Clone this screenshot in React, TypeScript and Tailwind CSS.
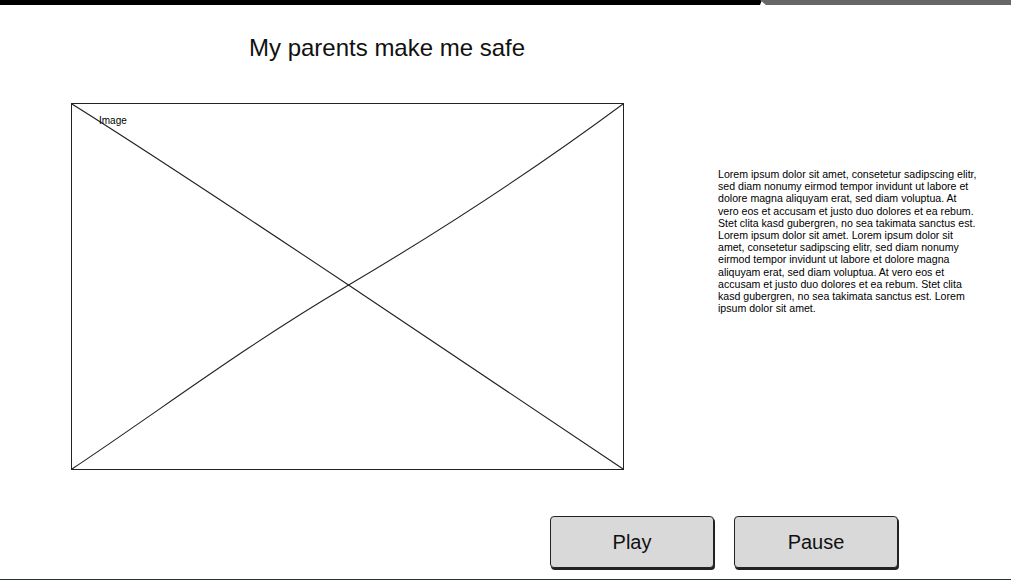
import React from "react";

const lorem =
  "Lorem ipsum dolor sit amet, consetetur sadipscing elitr, sed diam nonumy eirmod tempor invidunt ut labore et dolore magna aliquyam erat, sed diam voluptua. At vero eos et accusam et justo duo dolores et ea rebum. Stet clita kasd gubergren, no sea takimata sanctus est. Lorem ipsum dolor sit amet. Lorem ipsum dolor sit amet, consetetur sadipscing elitr, sed diam nonumy eirmod tempor invidunt ut labore et dolore magna aliquyam erat, sed diam voluptua. At vero eos et accusam et justo duo dolores et ea rebum. Stet clita kasd gubergren, no sea takimata sanctus est. Lorem ipsum dolor sit amet.";

const SketchButton = ({ label }: { label: string }) => (
  <button className="w-[164px] h-[52px] bg-[#d9d9d9] border border-[#222] rounded-[4px] shadow-[1px_2px_0_#222] text-[20px] text-[#111] flex items-center justify-center">
    {label}
  </button>
);

export default function App() {
  return (
    <div className="w-[1011px] h-[580px] bg-white relative overflow-hidden font-['Liberation_Sans',Arial,sans-serif] flex flex-col">
      {/* top strip */}
      <div className="flex h-[5px]">
        <div className="w-[762px] bg-black [clip-path:polygon(0_0,100%_0,calc(100%-2px)_100%,0_100%)]" />
        <div className="flex-1 bg-[#666] -ml-[2px] [clip-path:polygon(0_0,100%_0,100%_100%,6px_100%)]" />
      </div>

      <div className="h-[30px] mt-[28px] pl-[249px] text-[24px] leading-[30px] text-[#111]">
        My parents make me safe
      </div>

      <div className="flex mt-[40px]">
        <div className="ml-[71px] w-[553px] h-[367px] relative border border-[#222]">
          <svg className="absolute inset-0" width="551" height="365" viewBox="0 0 551 365">
            <path d="M0 0 C 80 50, 170 110, 275 180 S 470 310, 551 365" fill="none" stroke="#222" strokeWidth="1.1" />
            <path d="M551 0 C 470 60, 380 120, 275 182 S 90 305, 0 365" fill="none" stroke="#222" strokeWidth="1.1" />
          </svg>
          <span className="absolute left-[27px] top-[12px] text-[10px] leading-none text-black">Image</span>
        </div>
        <p className="ml-[94px] mt-[65px] w-[262px] text-[10.6px] leading-[12.2px] text-black">{lorem}</p>
      </div>

      <div className="flex gap-[20px] ml-[550px] mt-[46px]">
        <SketchButton label="Play" />
        <SketchButton label="Pause" />
      </div>

      <div className="absolute left-0 right-0 bottom-0 h-[1px] bg-[#263236]" />
    </div>
  );
}
